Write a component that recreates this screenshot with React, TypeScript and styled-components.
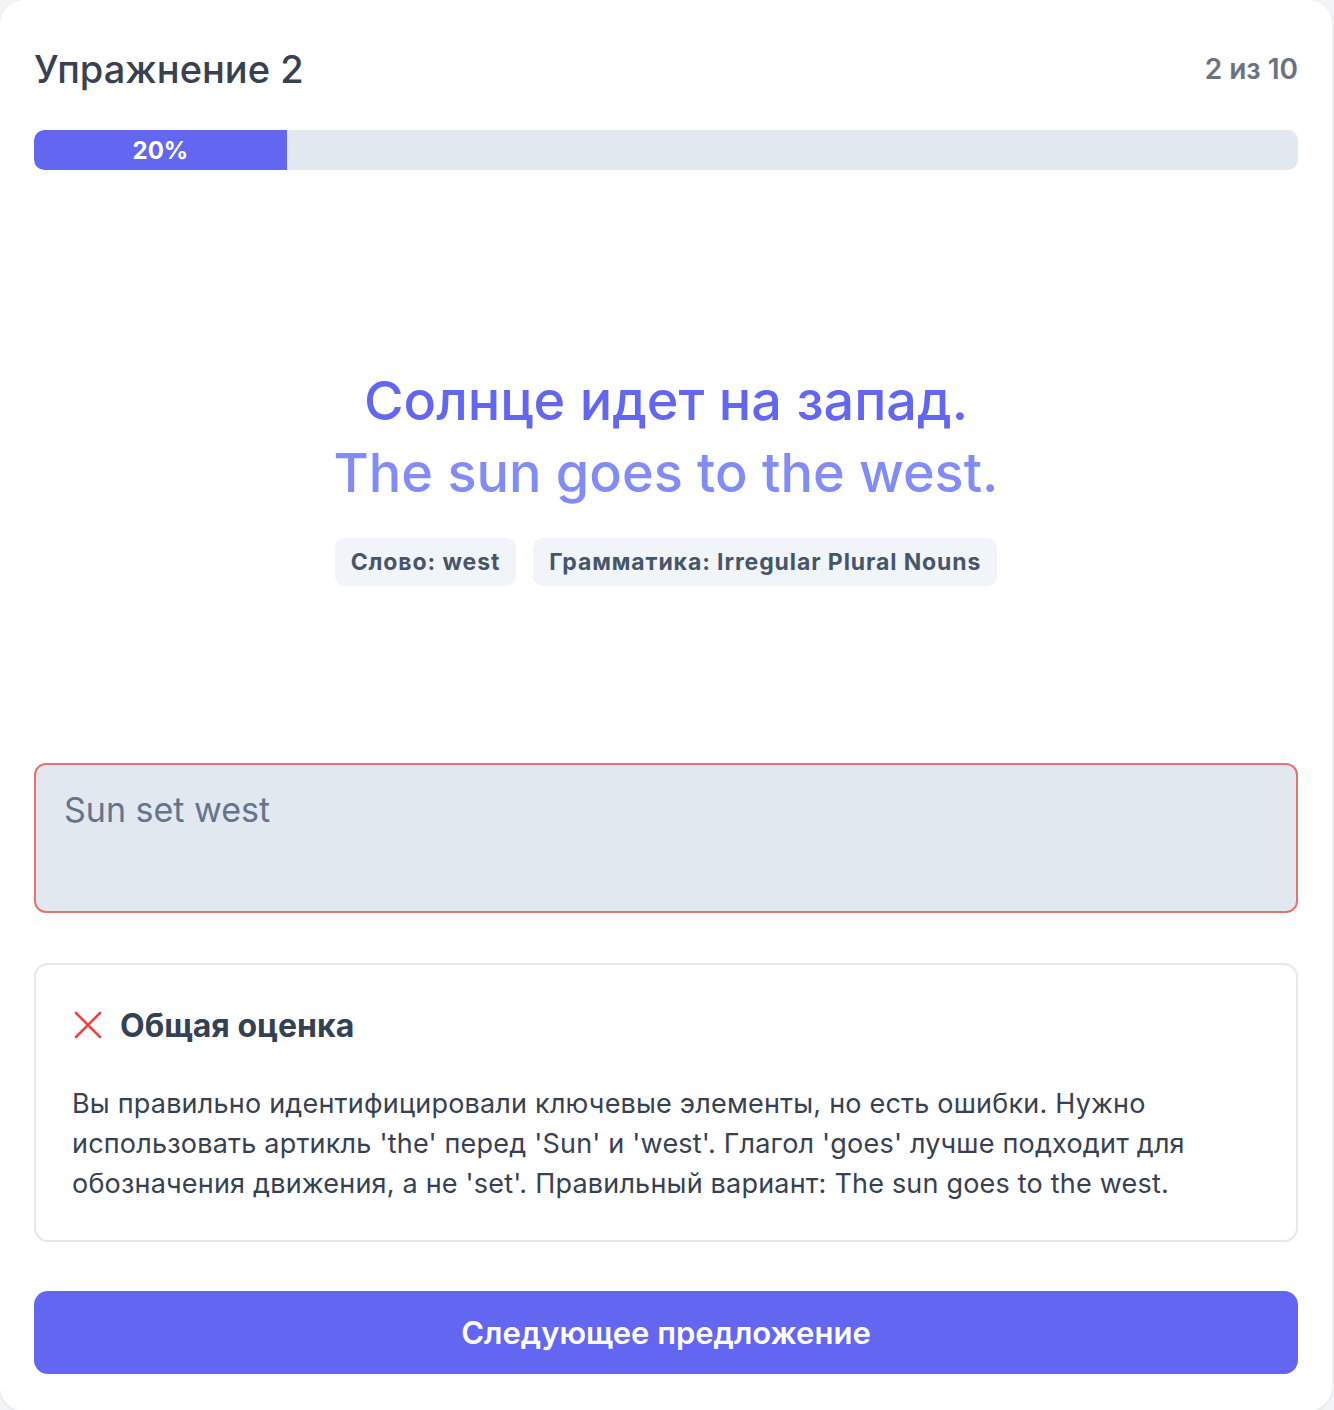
import React from "react";
import styled, { createGlobalStyle } from "styled-components";

const GlobalStyle = createGlobalStyle`
  html, body {
    margin: 0;
    padding: 0;
    background: #f3f4f6;
  }
  body {
    font-family: Inter, "Noto Sans", "Liberation Sans", sans-serif;
    -webkit-font-smoothing: antialiased;
  }
  * { box-sizing: border-box; }
`;

const Card = styled.div`
  width: 1332px;
  min-height: 1410px;
  background: #ffffff;
  border-radius: 24px;
  box-shadow: 0 1px 3px rgba(0, 0, 0, 0.08);
  padding: 34px 34px 37px;
  display: flex;
  flex-direction: column;
`;

const Header = styled.div`
  height: 70px;
  display: flex;
  align-items: center;
  justify-content: space-between;
`;

const Title = styled.h1`
  margin: 0;
  font-size: 38px;
  line-height: 48px;
  font-weight: 500;
  color: #374151;
`;

const Counter = styled.span`
  font-size: 28px;
  font-weight: 600;
  color: #6b7280;
`;

const Track = styled.div`
  margin-top: 26px;
  height: 40px;
  background: #e2e8f0;
  border-radius: 10px;
  overflow: hidden;
  display: flex;
`;

const Fill = styled.div`
  height: 100%;
  background: #6366f1;
  border-radius: 10px 0 0 10px;
  display: flex;
  align-items: center;
  justify-content: center;
  color: #ffffff;
  font-size: 24px;
  font-weight: 700;
`;

const Prompt = styled.section`
  padding: 195px 0 177px;
  display: flex;
  flex-direction: column;
  align-items: center;
`;

const Sentence = styled.div<{ $light?: boolean }>`
  font-size: 54px;
  line-height: 72px;
  font-weight: 500;
  color: ${(p) => (p.$light ? "#818cf8" : "#6366f1")};
  text-align: center;
`;

const Tags = styled.div`
  margin-top: 29px;
  display: flex;
  gap: 17px;
  justify-content: center;
`;

const Tag = styled.span`
  height: 48px;
  padding: 0 16px;
  display: inline-flex;
  align-items: center;
  background: #f1f5f9;
  border-radius: 10px;
  font-size: 23px;
  font-weight: 700;
  letter-spacing: 0.9px;
  color: #475569;
`;

const Answer = styled.div`
  height: 150px;
  background: #e2e8f0;
  border: 2px solid #e5736f;
  border-radius: 12px;
  padding: 21px 28px;
  font-size: 34px;
  line-height: 48px;
  color: #64748b;
`;

const Feedback = styled.div`
  margin-top: 50px;
  border: 2px solid #e5e7eb;
  border-radius: 14px;
  padding: 36px 36px 36px;
  display: flex;
  flex-direction: column;
  gap: 35px;
`;

const FeedbackHead = styled.div`
  display: flex;
  align-items: center;
  gap: 16px;
  height: 48px;
`;

const FeedbackTitle = styled.h2`
  margin: 0;
  font-size: 32px;
  font-weight: 700;
  color: #334155;
`;

const FeedbackText = styled.p`
  margin: 0;
  font-size: 27px;
  line-height: 40px;
  letter-spacing: 0.2px;
  color: #374151;
`;

const NextButton = styled.button`
  margin-top: 49px;
  height: 83px;
  width: 100%;
  border: none;
  border-radius: 14px;
  background: #6366f1;
  color: #ffffff;
  font-family: inherit;
  font-size: 31px;
  font-weight: 600;
  cursor: pointer;
`;

const CrossIcon = () => (
  <svg width="32" height="32" viewBox="0 0 32 32" fill="none">
    <path
      d="M4 4L28 28M28 4L4 28"
      stroke="#ef4444"
      strokeWidth="2.6"
      strokeLinecap="round"
    />
  </svg>
);

export default function App() {
  const progress = 20;
  return (
    <>
      <GlobalStyle />
      <Card>
        <Header>
          <Title>Упражнение 2</Title>
          <Counter>2 из 10</Counter>
        </Header>
        <Track>
          <Fill style={{ width: `${progress}%` }}>{progress}%</Fill>
        </Track>
        <Prompt>
          <Sentence>Солнце идет на запад.</Sentence>
          <Sentence $light>The sun goes to the west.</Sentence>
          <Tags>
            <Tag>Слово: west</Tag>
            <Tag>Грамматика: Irregular Plural Nouns</Tag>
          </Tags>
        </Prompt>
        <Answer>Sun set west</Answer>
        <Feedback>
          <FeedbackHead>
            <CrossIcon />
            <FeedbackTitle>Общая оценка</FeedbackTitle>
          </FeedbackHead>
          <FeedbackText>
            Вы правильно идентифицировали ключевые элементы, но есть ошибки.
            Нужно использовать артикль 'the' перед 'Sun' и 'west'. Глагол 'goes'
            лучше подходит для обозначения движения, а не 'set'. Правильный
            вариант: The sun goes to the west.
          </FeedbackText>
        </Feedback>
        <NextButton>Следующее предложение</NextButton>
      </Card>
    </>
  );
}
